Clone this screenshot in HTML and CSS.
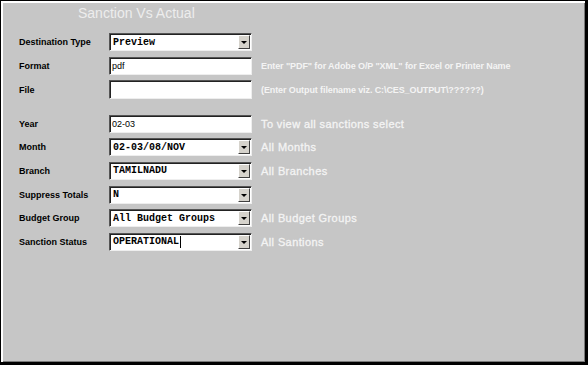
FILE: index.html
```html
<!DOCTYPE html>
<html lang="en">
<head>
    <meta charset="UTF-8">
    <title>Sanction Vs Actual</title>
    <link rel="stylesheet" href="styles.css">
</head>
<body>
    <div class="window">
        <div class="title">Sanction Vs Actual</div>
        <div class="form">
            <div class="row">
                <div class="label">Destination Type</div>
                <div class="field combo"><span class="mono">Preview</span><span class="drop"></span></div>
            </div>
            <div class="row">
                <div class="label">Format</div>
                <div class="field text">pdf</div>
                <div class="hint">Enter "PDF" for Adobe O/P "XML" for Excel or Printer Name</div>
            </div>
            <div class="row tall">
                <div class="label">File</div>
                <div class="field text"></div>
                <div class="hint">(Enter Output filename viz. C:\CES_OUTPUT\??????)</div>
            </div>
            <div class="row spaced">
                <div class="label">Year</div>
                <div class="field text">02-03</div>
                <div class="hint big">To view all sanctions select</div>
            </div>
            <div class="row">
                <div class="label">Month</div>
                <div class="field combo"><span class="mono">02-03/08/NOV</span><span class="drop"></span></div>
                <div class="hint big">All Months</div>
            </div>
            <div class="row">
                <div class="label">Branch</div>
                <div class="field combo"><span class="mono">TAMILNADU</span><span class="drop"></span></div>
                <div class="hint big">All Branches</div>
            </div>
            <div class="row">
                <div class="label">Suppress Totals</div>
                <div class="field combo"><span class="mono">N</span><span class="drop"></span></div>
            </div>
            <div class="row">
                <div class="label">Budget Group</div>
                <div class="field combo"><span class="mono">All Budget Groups</span><span class="drop"></span></div>
                <div class="hint big">All Budget Groups</div>
            </div>
            <div class="row">
                <div class="label">Sanction Status</div>
                <div class="field combo"><span class="mono">OPERATIONAL<span class="caret"></span></span><span class="drop"></span></div>
                <div class="hint big">All Santions</div>
            </div>
        </div>
    </div>
</body>
</html>
```

FILE: styles.css
```css
body {
    margin: 0;
    background: #c6c6c6;
    font-family: "Liberation Sans", Arial, sans-serif;
}
.window {
    width: 588px;
    height: 365px;
    box-sizing: border-box;
    background: #c6c6c6;
    border-style: solid;
    border-color: #000;
    border-width: 1px 3px 3px 1px;
    box-shadow: inset 2px 2px 0 #fff, inset -1px -1px 0 #7a7a7a;
    padding: 5px 0 0 18px;
}
.title {
    margin-left: 59px;
    font-size: 14px;
    line-height: 15px;
    color: #ededed;
}
.form {
    margin-top: 12px;
    display: flex;
    flex-direction: column;
    gap: 5.6px;
}
.row {
    display: flex;
    align-items: center;
    height: 18px;
}
.row.tall {
    height: 19px;
}
.row.spaced {
    margin-top: 10px;
}
.label {
    width: 90px;
    font-size: 9px;
    font-weight: bold;
    color: #000;
}
.field {
    width: 143px;
    height: 18px;
    box-sizing: border-box;
    background: #fff;
    border: 1px solid;
    border-color: #555 #eee #eee #555;
    box-shadow: inset 1px 1px 0 #222;
    display: flex;
    align-items: center;
    font-size: 9px;
    padding-left: 2px;
    color: #000;
}
.row.tall .field {
    height: 19px;
}
.combo {
    padding-left: 3px;
    justify-content: space-between;
}
.mono {
    font-family: "Liberation Mono", "Courier New", monospace;
    font-size: 10px;
    font-weight: bold;
    white-space: pre;
    display: flex;
    align-items: center;
}
.caret {
    width: 1px;
    height: 12px;
    background: #000;
    margin-left: 1px;
}
.drop {
    width: 12px;
    height: 14px;
    box-sizing: border-box;
    margin-right: 1px;
    background: #d6d3cc;
    border: 1px solid;
    border-color: #fff #404040 #404040 #fff;
    position: relative;
}
.drop::after {
    content: "";
    position: absolute;
    left: 2px;
    top: 5px;
    border-left: 3px solid transparent;
    border-right: 3px solid transparent;
    border-top: 3px solid #000;
}
.hint {
    margin-left: 9px;
    font-size: 9px;
    font-weight: bold;
    letter-spacing: -0.1px;
    color: #f4f4f4;
}
.hint.big {
    font-size: 11px;
    font-weight: normal;
    letter-spacing: 0.4px;
    -webkit-text-stroke: 0.3px #f4f4f4;
}
```
